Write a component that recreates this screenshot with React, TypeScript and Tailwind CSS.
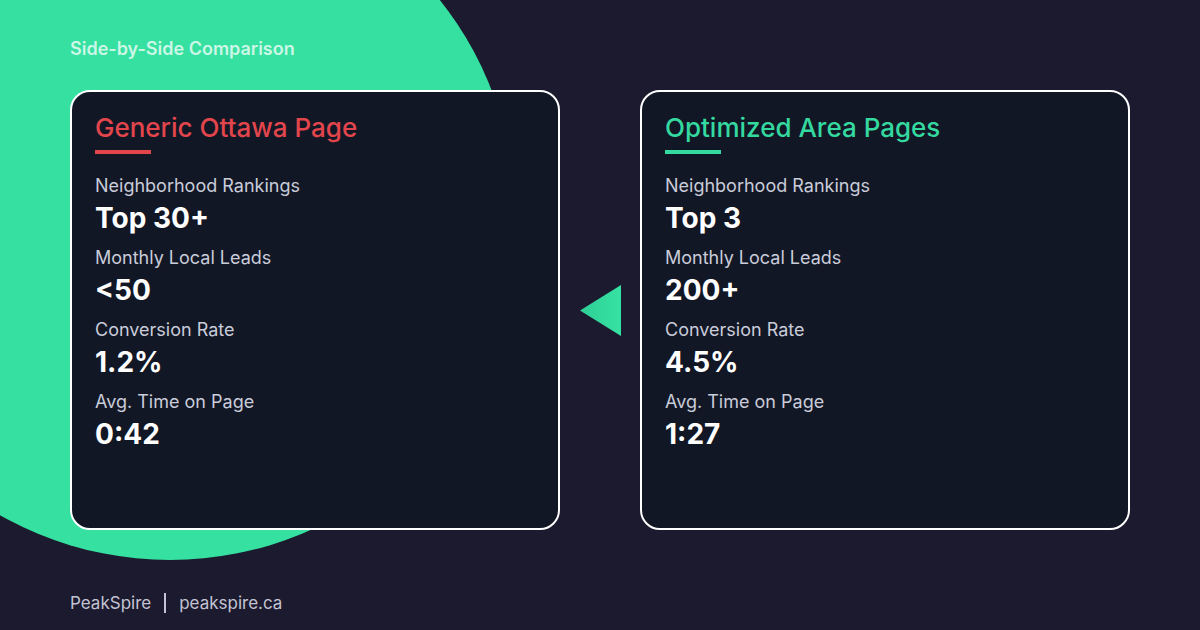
import React from "react";

type Metric = { label: string; value: string };

interface CardProps {
  title: string;
  accent: "red" | "green";
  metrics: Metric[];
}

const generic: Metric[] = [
  { label: "Neighborhood Rankings", value: "Top 30+" },
  { label: "Monthly Local Leads", value: "<50" },
  { label: "Conversion Rate", value: "1.2%" },
  { label: "Avg. Time on Page", value: "0:42" },
];

const optimized: Metric[] = [
  { label: "Neighborhood Rankings", value: "Top 3" },
  { label: "Monthly Local Leads", value: "200+" },
  { label: "Conversion Rate", value: "4.5%" },
  { label: "Avg. Time on Page", value: "1:27" },
];

function CompareCard({ title, accent, metrics }: CardProps) {
  const red = accent === "red";
  return (
    <div className="w-[490px] h-[440px] shrink-0 rounded-[20px] border-2 border-white bg-[#121726] pl-[23px] pt-5">
      <h2
        className={
          red
            ? "text-[26px] leading-[32px] font-medium text-[#e2464c]"
            : "text-[26px] leading-[32px] font-medium text-[#34d9a0]"
        }
      >
        {title}
      </h2>
      <div className={red ? "mt-[6px] h-1 w-14 bg-[#e2464c]" : "mt-[6px] h-1 w-14 bg-[#34d9a0]"} />
      <div className="mt-[20px] flex flex-col gap-[11px]">
        {metrics.map((m) => (
          <div key={m.label}>
            <div className="text-[18px] leading-6 text-[#c9ccd9]">{m.label}</div>
            <div className="mt-[3px] text-[28px] leading-[34px] font-bold text-white">{m.value}</div>
          </div>
        ))}
      </div>
    </div>
  );
}

export default function App() {
  return (
    <div
      className="relative w-[1200px] h-[630px] overflow-hidden bg-[#1c1a2e]"
      style={{ fontFamily: "Inter, 'Noto Sans', sans-serif" }}
    >
      {/* big decorative circle */}
      <div className="absolute left-[-175px] top-[-130px] w-[690px] h-[690px] rounded-full bg-[#35e0a1]" />

      <div className="relative flex flex-col h-full px-[70px]">
        <div className="pt-[37px] text-[18px] leading-6 font-semibold text-white/75">
          Side-by-Side Comparison
        </div>

        <div className="mt-[29px] flex items-center">
          <CompareCard title="Generic Ottawa Page" accent="red" metrics={generic} />
          <div className="flex flex-1 justify-center">
            <svg width="42" height="51" viewBox="0 0 42 51" className="ml-[1px]">
              <defs>
                <linearGradient id="arr" x1="0" x2="1" y1="0" y2="0">
                  <stop offset="0" stopColor="#2fcf96" />
                  <stop offset="1" stopColor="#36e2a3" />
                </linearGradient>
              </defs>
              <polygon points="0,25.5 41,0 41,51" fill="url(#arr)" />
            </svg>
          </div>
          <CompareCard title="Optimized Area Pages" accent="green" metrics={optimized} />
        </div>

        <div className="mt-[61px] flex items-center text-[17px] leading-6 text-[#c3c3d3]">
          <span>PeakSpire</span>
          <span className="mx-[13px] h-5 w-[2px] bg-[#c3c3d3]" />
          <span>peakspire.ca</span>
        </div>
      </div>
    </div>
  );
}
